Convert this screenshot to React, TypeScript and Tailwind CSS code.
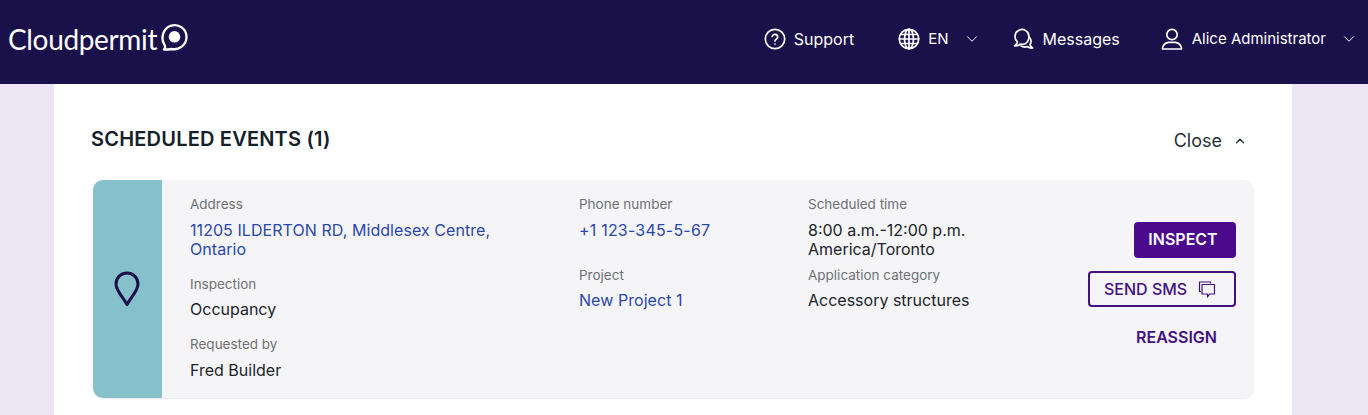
import { ChevronDown, ChevronUp } from "lucide-react";

function Field({ label, children, className = "", tight = false }: { label: string; children: React.ReactNode; className?: string; tight?: boolean }) {
  return (
    <div className={className}>
      <div className="text-[13.5px] leading-[20px] text-[#6f7175]">{label}</div>
      <div className={`${tight ? "mt-[6px]" : "mt-[7px]"} text-[16px] leading-[19px] text-[#20242a]`}>{children}</div>
    </div>
  );
}

function Link({ children }: { children: React.ReactNode }) {
  return <span className="tracking-[0.06px] text-[#2a47ab]">{children}</span>;
}

function NavIcon({ children }: { children: React.ReactNode }) {
  return (
    <svg width="24" height="24" viewBox="0 0 24 24" fill="none" stroke="currentColor" strokeWidth="1.7" strokeLinecap="round" strokeLinejoin="round">
      {children}
    </svg>
  );
}

export default function App() {
  return (
    <div className="h-[415px] w-[1368px] overflow-hidden bg-[#ebe5f4] font-['Inter',sans-serif]">
      <header className="flex h-[84px] items-center bg-[#1a104a] pb-[6px] text-white">
        <div className="ml-[8px] flex items-center">
          <span className="font-['Lato',sans-serif] text-[28px] font-normal leading-none tracking-[-0.35px]">Cloudpermit</span>
          <svg width="28" height="30" viewBox="0 0 28 30" className="ml-[3px] -mt-[3px]">
            <path d="M4 26.5 C5.5 25 5.5 24 4.6 22 C0.5 16 2.5 6 10.5 2.8 C19 0 26.5 6 26.5 14 C26.5 22 19 27.5 11.5 26 C9.5 26.3 7 26.6 4 26.5 Z" fill="none" stroke="white" strokeWidth="2.3" strokeLinejoin="round" />
            <circle cx="14.5" cy="13.8" r="5.8" fill="white" />
          </svg>
        </div>
        <nav className="ml-auto flex items-center text-[16px]">
          <div className="flex items-center">
            <NavIcon>
              <circle cx="12" cy="12" r="9.7" />
              <path d="M9.2 9.4a2.8 2.8 0 0 1 5.5.6c0 1.9-2.7 2.3-2.7 4" />
              <path d="M12 17h.01" />
            </NavIcon>
            <span className="ml-[7px]">Support</span>
          </div>
          <div className="ml-[43px] flex items-center">
            <NavIcon>
              <circle cx="12" cy="12" r="9.7" />
              <ellipse cx="12" cy="12" rx="4.5" ry="9.7" />
              <path d="M12 2.3v19.4M2.3 12h19.4M3.6 7.5h16.8M3.6 16.5h16.8" />
            </NavIcon>
            <span className="ml-[7px] text-[15px]">EN</span>
            <ChevronDown className="ml-[14px] h-[18px] w-[18px]" strokeWidth={1.3} />
          </div>
          <div className="ml-[30px] flex items-center">
            <NavIcon>
              <path d="M18 9.5a7 7 0 1 0-11.5 5.4c-.3 1.7-1.4 3-2.9 3.9 2.3.2 4.4-.4 6-1.8.8.3 1.6.4 2.4.4 3.4 0 6-3.5 6-7.9z" />
              <path d="M18.6 10.5c1.6 2 1.7 5 .4 7 .3 1.4 1.2 2.6 2.7 3.5-2.1.2-4-.3-5.5-1.5-2 .8-4.4.6-6.1-.6" />
            </NavIcon>
            <span className="ml-[8px]">Messages</span>
          </div>
          <div className="ml-[40px] flex items-center">
            <NavIcon>
              <circle cx="12" cy="7.5" r="5.2" />
              <path d="M2.5 22c0-1 .1-2 .6-2.9 1-2 3-3.6 5.4-3.8h7c2.4.2 4.4 1.8 5.4 3.8.5.9.6 1.9.6 2.9z" />
            </NavIcon>
            <span className="ml-[8px] text-[15px]">Alice Administrator</span>
            <ChevronDown className="ml-[14px] mr-[10px] h-[18px] w-[18px]" strokeWidth={1.3} />
          </div>
        </nav>
      </header>

      <main className="mx-[54px] h-[331px] w-[1238px] bg-white pl-[37px] pr-[38px] pt-[43px]">
        <div className="flex h-[24px] items-center justify-between">
          <h2 className="text-[20px] font-semibold tracking-[0.2px] text-[#14202a]">SCHEDULED EVENTS (1)</h2>
          <button className="mr-[7px] mt-[3px] flex items-center text-[18px] text-[#26303a]">
            Close
            <ChevronUp className="ml-[11px] h-[14px] w-[14px]" strokeWidth={2.4} />
          </button>
        </div>

        <div className="mt-[29px] ml-[2px] flex h-[218px] w-[1161px] overflow-hidden rounded-[10px] bg-[#f5f5f8] shadow-[0_1px_1px_rgba(0,0,0,0.08)]">
          <div className="flex w-[69px] shrink-0 items-center justify-center bg-[#85c0cb] pr-[2px] text-[#1a104a]">
            <svg width="26" height="36" viewBox="0 0 26 36" fill="none">
              <path d="M13 33.5 C9 26 2 20 2 13 C2 6.5 7 2 13 2 C19 2 24 6.5 24 13 C24 20 17 26 13 33.5 Z" stroke="currentColor" strokeWidth="3" strokeLinejoin="round" />
            </svg>
          </div>

          <div className="ml-[28px] w-[389px] pt-[14px]">
            <Field label="Address">
              <Link>11205 ILDERTON RD, Middlesex Centre,<br />Ontario</Link>
            </Field>
            <Field label="Inspection" className="mt-[15px]" tight>Occupancy</Field>
            <Field label="Requested by" className="mt-[15px]">Fred Builder</Field>
          </div>

          <div className="w-[229px] pt-[14px]">
            <Field label="Phone number"><span className="tracking-[0.2px] text-[#2a47ab]">+1 123-345-5-67</span></Field>
            <Field label="Project" className="mt-[25px]" tight><Link>New Project 1</Link></Field>
          </div>

          <div className="w-[280px] pt-[14px]">
            <Field label="Scheduled time">8:00 a.m.-12:00 p.m.<br />America/Toronto</Field>
            <Field label="Application category" className="mt-[6px]" tight>Accessory structures</Field>
          </div>

          <div className="flex w-[148px] flex-col items-end pt-[42px]">
            <button className="h-[36px] w-[102px] rounded-[4px] bg-[#4b0a8c] pb-[2px] pr-[4px] text-[16px] font-semibold text-white">INSPECT</button>
            <button className="mt-[13px] flex h-[36px] w-[148px] items-center rounded-[4px] border-2 border-[#42107f] pl-[14px] text-[16px] font-medium text-[#42107f]">
              SEND SMS
              <svg width="18" height="18" viewBox="0 0 18 18" fill="none" stroke="currentColor" strokeWidth="1.2" strokeLinejoin="round" className="ml-[11px]">
                <path d="M3 11.5H1.5V2h11v1.5" />
                <path d="M4 4.5h12.5v9.5h-5l-2 3v-3H4z" />
              </svg>
            </button>
            <button className="mt-[16px] mr-[19px] h-[28px] text-[16px] font-semibold text-[#42107f]">REASSIGN</button>
          </div>
        </div>
      </main>
    </div>
  );
}
